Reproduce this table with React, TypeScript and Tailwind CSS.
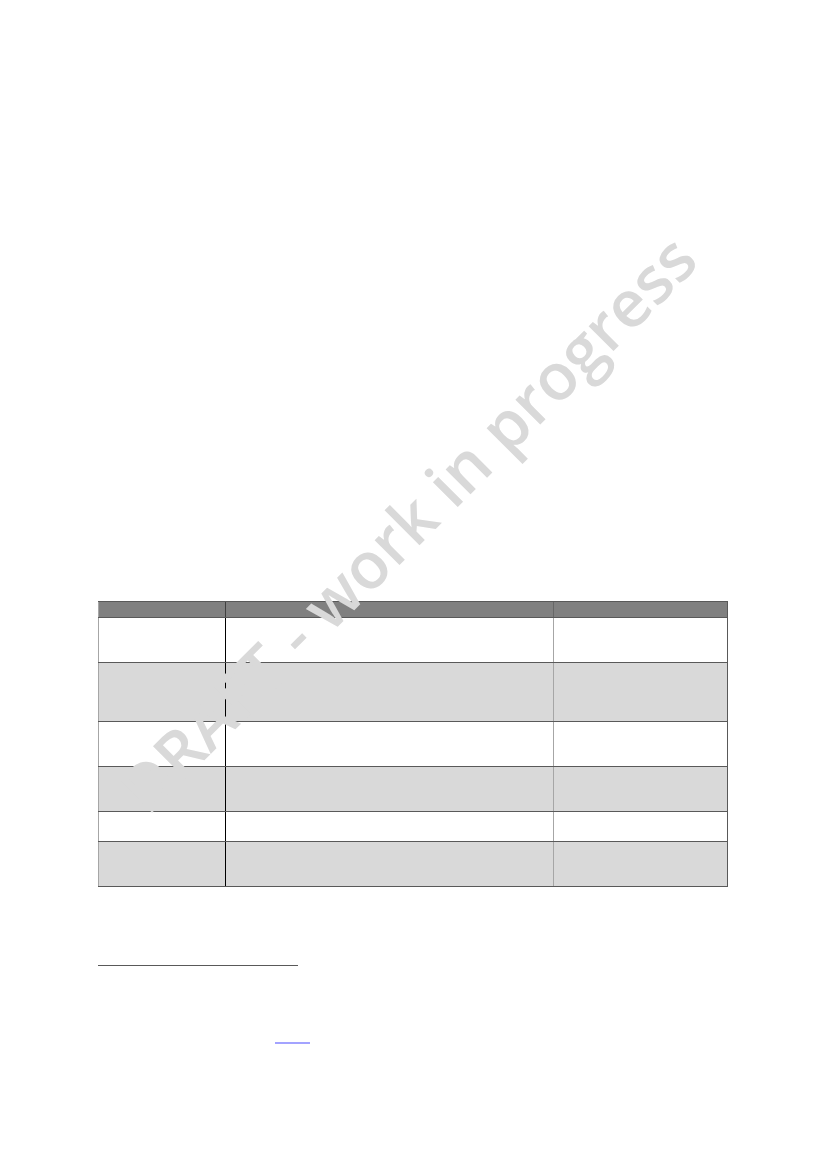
import React from "react";

const rows: { h: string; gray: boolean }[] = [
  { h: "h-[45px]", gray: false },
  { h: "h-[59px]", gray: true },
  { h: "h-[45px]", gray: false },
  { h: "h-[45px]", gray: true },
  { h: "h-[30px]", gray: false },
  { h: "h-[45px]", gray: true },
];

export default function App() {
  return (
    <div className="relative w-[827px] h-[1169px] bg-white overflow-hidden" style={{ fontFamily: '"Open Sans", "Liberation Sans", sans-serif' }}>
      <div className="pt-[601px] pl-[98px] flex flex-col">
        <div className="w-[630px] flex flex-col">
          <div className="flex h-[17px] bg-[#808080] border-t border-b border-[#595959]">
            <div className="w-[128px] border-l border-r border-l-[#a6a6a6] border-r-[#404040]" />
            <div className="w-[328px] border-r border-[#666666]" />
            <div className="flex-1 border-r border-[#595959]" />
          </div>
          {rows.map((r, i) => (
            <div key={i} className={`flex ${r.h} border-b border-[#595959] ${r.gray ? "bg-[#d9d9d9]" : "bg-transparent"}`}>
              <div className="w-[128px] border-l border-r border-l-[#a6a6a6] border-r-black" />
              <div className="w-[328px] border-r border-[#a6a6a6]" />
              <div className="flex-1 border-r border-[#595959]" />
            </div>
          ))}
        </div>
        <div className="mt-[78px] w-[200px] h-px bg-[#595959]" />
        <div className="mt-[76px] ml-[177px] w-[35px] h-[2px] bg-[#a3a3ff]" />
      </div>
      <div className="pointer-events-none absolute left-[407px] top-[523px] -translate-x-1/2 -translate-y-1/2 -rotate-45 whitespace-nowrap text-[65px] font-semibold leading-none text-[#d9d9d9]">
        DRAFT - work in progress
      </div>
    </div>
  );
}
